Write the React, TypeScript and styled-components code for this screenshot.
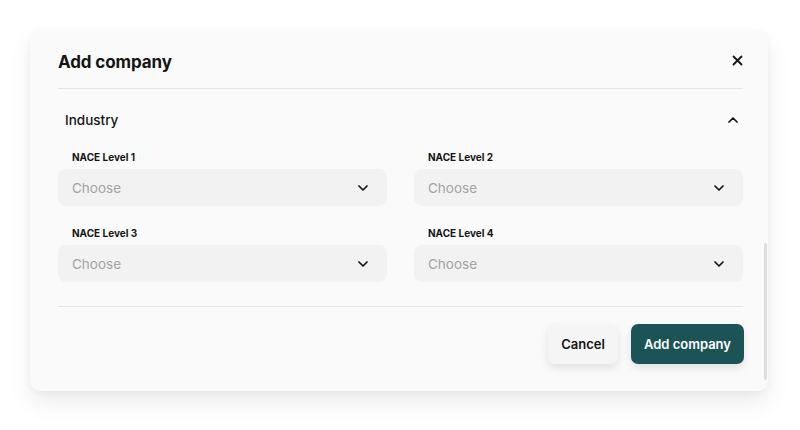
import React from 'react';
import styled, { createGlobalStyle } from 'styled-components';

const GlobalStyle = createGlobalStyle`
  html, body {
    margin: 0;
    padding: 0;
    background: #ffffff;
    font-family: Inter, "Noto Sans", sans-serif;
    color: #141414;
  }
`;

const Page = styled.div`
  width: 800px;
  height: 430px;
  padding: 30px 0 0 30px;
  box-sizing: border-box;
`;

const Modal = styled.div`
  position: relative;
  width: 738px;
  height: 361px;
  box-sizing: border-box;
  padding: 0 25px 0 28px;
  background: #fafafa;
  border-radius: 10px;
  box-shadow: 0 12px 24px rgba(0, 0, 0, 0.08), 0 2px 6px rgba(0, 0, 0, 0.04);
  display: flex;
  flex-direction: column;
`;

const Scrollbar = styled.div`
  position: absolute;
  right: 1px;
  top: 213px;
  width: 3px;
  height: 137px;
  background: #dddddd;
  border-radius: 2px;
`;

const Header = styled.div`
  height: 59px;
  border-bottom: 1px solid #e5e5e5;
  display: flex;
  align-items: center;
  justify-content: space-between;
  padding-top: 3px;
  box-sizing: border-box;
`;

const Title = styled.h2`
  margin: 0;
  padding-top: 3px;
  font-size: 17px;
  font-weight: 700;
  letter-spacing: -0.1px;
`;

const IconButton = styled.button`
  border: 0;
  background: none;
  padding: 0;
  width: 12px;
  height: 12px;
  display: flex;
  align-items: center;
  justify-content: center;
  color: #141414;
  cursor: pointer;
`;

const SectionHead = styled.div`
  display: flex;
  align-items: center;
  justify-content: space-between;
  height: 22px;
  margin-top: 20px;
  padding: 0 5px 0 7px;
`;

const SectionTitle = styled.span`
  font-size: 13.5px;
  font-weight: 500;
`;

const Grid = styled.div`
  display: grid;
  grid-template-columns: 1fr 1fr;
  column-gap: 27px;
  row-gap: 21px;
  margin-top: 20px;
  padding-bottom: 24px;
  border-bottom: 1px solid #e5e5e5;
`;

const Field = styled.div`
  display: flex;
  flex-direction: column;
`;

const Label = styled.label`
  font-size: 10px;
  font-weight: 700;
  line-height: 13px;
  padding-left: 14px;
  margin-bottom: 5px;
`;

const Select = styled.div`
  height: 37px;
  border-radius: 8px;
  background: #f2f2f2;
  display: flex;
  align-items: center;
  justify-content: space-between;
  padding: 0 19px 0 14px;
`;

const Placeholder = styled.span`
  font-size: 13.5px;
  color: #a3a3a3;
`;

const Footer = styled.div`
  display: flex;
  justify-content: flex-end;
  gap: 13px;
  margin-top: 17px;
  margin-right: -1px;
`;

const Button = styled.button<{ $primary?: boolean }>`
  height: 40px;
  border: 0;
  border-radius: 7px;
  padding: 0 13px;
  font-family: inherit;
  font-size: 13px;
  font-weight: 600;
  cursor: pointer;
  background: ${p => (p.$primary ? '#1c5456' : '#f5f5f5')};
  color: ${p => (p.$primary ? '#ffffff' : '#141414')};
  box-shadow: 0 4px 8px rgba(0, 0, 0, 0.1);
`;

const Chevron = ({ up }: { up?: boolean }) => (
  <svg width="10" height="6" viewBox="0 0 10 6" fill="none">
    <path
      d={up ? 'M1 5L5 1L9 5' : 'M1 1L5 5L9 1'}
      stroke="#141414"
      strokeWidth="1.7"
      strokeLinecap="round"
      strokeLinejoin="round"
    />
  </svg>
);

const levels = ['NACE Level 1', 'NACE Level 2', 'NACE Level 3', 'NACE Level 4'];

export default function App() {
  return (
    <Page>
      <GlobalStyle />
      <Modal>
        <Header>
          <Title>Add company</Title>
          <IconButton aria-label="Close">
            <svg width="11" height="11" viewBox="0 0 11 11" fill="none">
              <path d="M1.5 1.5L9.5 9.5M9.5 1.5L1.5 9.5" stroke="#141414" strokeWidth="1.8" strokeLinecap="round" />
            </svg>
          </IconButton>
        </Header>

        <SectionHead>
          <SectionTitle>Industry</SectionTitle>
          <Chevron up />
        </SectionHead>

        <Grid>
          {levels.map(l => (
            <Field key={l}>
              <Label>{l}</Label>
              <Select>
                <Placeholder>Choose</Placeholder>
                <Chevron />
              </Select>
            </Field>
          ))}
        </Grid>

        <Footer>
          <Button>Cancel</Button>
          <Button $primary>Add company</Button>
        </Footer>
        <Scrollbar />
      </Modal>
    </Page>
  );
}
